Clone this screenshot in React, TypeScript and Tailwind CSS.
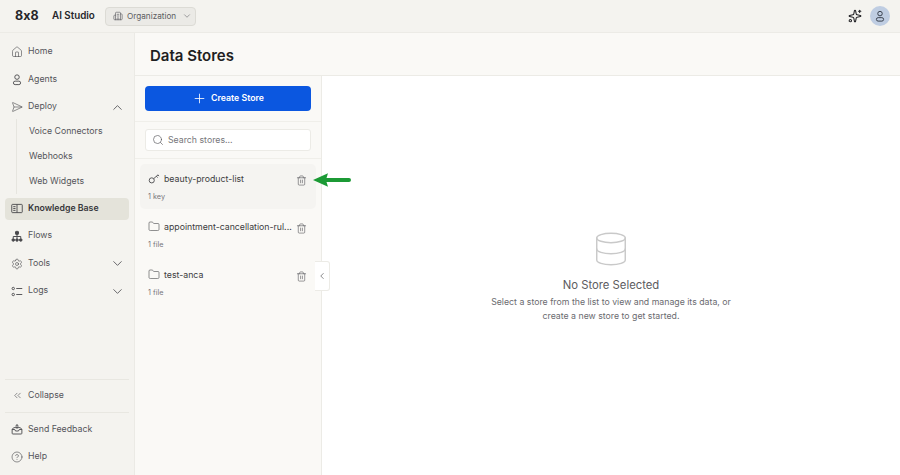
import {
  Building2,
  ChevronDown,
  ChevronLeft,
  ChevronUp,
  ChevronsLeft,
  CircleHelp,
  Database,
  Folder,
  House,
  Plus,
  Search,
  SendHorizontal,
  Settings,
  Sparkles,
  Trash2,
} from 'lucide-react'
import type { ReactNode } from 'react'

function BookPanelIcon() {
  return (
    <svg width="13" height="13" viewBox="0 0 16 16" fill="none" stroke="currentColor" strokeWidth="1.2">
      <rect x="1" y="2.5" width="14" height="11" rx="1" />
      <path d="M8 2.5v11M3 5.5h3M3 8h3M3 10.5h3" />
    </svg>
  )
}

function LogsIcon() {
  return (
    <svg width="13" height="13" viewBox="0 0 16 16" fill="none" stroke="currentColor" strokeWidth="1.2">
      <circle cx="3" cy="4" r="1.6" />
      <circle cx="3" cy="12" r="1.6" />
      <path d="M7 4h8M7 12h8" />
    </svg>
  )
}

function FeedbackIcon() {
  return (
    <svg width="13" height="13" viewBox="0 0 16 16" fill="none" stroke="currentColor" strokeWidth="1.2">
      <path d="M1.5 7.5 4 5.5h8l2.5 2v5.5a1 1 0 0 1-1 1h-11a1 1 0 0 1-1-1z" />
      <path d="M1.5 8h3.5l1 2h4l1-2h3.5" />
      <path d="M8 7V1.5M5.8 3.6 8 1.5l2.2 2.1" />
    </svg>
  )
}

function AgentIcon({ size = 13 }: { size?: number }) {
  return (
    <svg width={size} height={size} viewBox="0 0 16 16" fill="none" stroke="currentColor" strokeWidth="1.2">
      <circle cx="8" cy="4.8" r="3" />
      <rect x="3.2" y="10.2" width="9.6" height="4.6" rx="2.3" />
    </svg>
  )
}

function FlowsIcon() {
  return (
    <svg width="13" height="13" viewBox="0 0 16 16" fill="none" stroke="currentColor" strokeWidth="1.3">
      <rect x="6" y="1.2" width="4" height="4" rx="0.8" fill="currentColor" />
      <path d="M8 5.2v5M3 10.5V8h10v2.5" />
      <circle cx="3" cy="12.6" r="1.7" fill="currentColor" />
      <circle cx="8" cy="12.6" r="1.7" fill="currentColor" />
      <circle cx="13" cy="12.6" r="1.7" fill="currentColor" />
    </svg>
  )
}

function KeyIcon() {
  return (
    <svg width="13" height="13" viewBox="0 0 16 16" fill="none" stroke="currentColor" strokeWidth="1.2">
      <circle cx="5" cy="10.5" r="3.4" />
      <path d="M7.6 8.2 13.5 3M11.2 5l1.6 1.8M13.2 3.2l1.4 1.6" />
    </svg>
  )
}

function NavItem({ icon, label, chevron, active }: { icon: ReactNode; label: string; chevron?: 'up' | 'down'; active?: boolean }) {
  return (
    <div
      className={`flex h-[22px] items-center gap-[5px] rounded-[4px] pl-[6px] text-[8.75px] ${
        active ? 'bg-[#e4e3da] font-semibold text-[#37373a]' : 'text-[#55555a]'
      }`}
    >
      <span className="flex w-[12px] justify-center text-[#48484c]">{icon}</span>
      <span className="flex-1">{label}</span>
      {chevron === 'up' && <ChevronUp size={15} strokeWidth={1.3} className="mr-[4px] text-[#48484c]" />}
      {chevron === 'down' && <ChevronDown size={15} strokeWidth={1.3} className="mr-[4px] text-[#48484c]" />}
    </div>
  )
}

function SubItem({ label }: { label: string }) {
  return <div className="flex h-[25px] items-center pl-[12px] text-[8.75px] text-[#55555a]">{label}</div>
}

function StoreRow({ icon, name, sub, selected }: { icon: ReactNode; name: string; sub: string; selected?: boolean }) {
  return (
    <div className={`h-[45px] rounded-[5px] pl-[8px] pr-[9px] pt-[7px] ${selected ? 'bg-[#f5f4f1]' : ''}`}>
      <div className="flex h-[18px] items-center">
        <span className="mr-[4px] flex w-[12px] -translate-y-[2px] justify-center text-[#48484c]">{icon}</span>
        <span className="min-w-0 flex-1 whitespace-nowrap text-[8.75px] text-[#3d3d40]">{name}</span>
        <Trash2 size={11} strokeWidth={1.3} className="ml-[3px] shrink-0 text-[#55555a]" />
      </div>
      <div className="mt-[1px] text-[7.25px] leading-[14px] text-[#77777b]">{sub}</div>
    </div>
  )
}

export default function App() {
  return (
    <div className="relative flex h-[475px] w-[900px] flex-col overflow-hidden bg-[#f4f3ef] font-['Inter',sans-serif]">
      {/* Top bar */}
      <header className="flex h-[33px] shrink-0 items-center border-b border-[#ecebe6] pl-[15px] pr-[10px]">
        <span className="w-[37px] text-[12.5px] font-bold text-[#26262a] [font-feature-settings:'calt'_0]">8x8</span>
        <span className="w-[53px] text-[9.8px] font-semibold text-[#26262a]">AI Studio</span>
        <div className="flex h-[19px] w-[91px] items-center gap-[4px] rounded-[4px] border border-[#dcdbd5] bg-[#ebeae6] pl-[7px] text-[8.2px] text-[#5c5c60]">
          <Building2 size={10} strokeWidth={1.5} />
          <span>Organization</span>
          <ChevronDown size={10} strokeWidth={1.3} className="ml-[2px]" />
        </div>
        <div className="ml-auto flex items-center gap-[8px]">
          <Sparkles size={14} strokeWidth={1.8} className="text-[#222225]" />
          <div className="flex h-[20px] w-[20px] items-center justify-center rounded-full bg-[#bfcde2] text-[#2c3340]">
            <AgentIcon size={12} />
          </div>
        </div>
      </header>

      <div className="flex min-h-0 flex-1">
        {/* Sidebar */}
        <aside className="flex w-[135px] shrink-0 flex-col border-r border-[#ebeae5] px-[5px] pt-[8px]">
          <nav className="flex flex-col gap-[5.5px]">
            <NavItem icon={<House size={14} strokeWidth={1.2} />} label="Home" />
            <NavItem icon={<AgentIcon />} label="Agents" />
            <NavItem icon={<SendHorizontal size={14} strokeWidth={1.2} />} label="Deploy" chevron="up" />
          </nav>
          <div className="ml-[11px] mt-[1px] flex flex-col border-l border-[#e6e5df]">
            <SubItem label="Voice Connectors" />
            <SubItem label="Webhooks" />
            <SubItem label="Web Widgets" />
          </div>
          <nav className="mt-[3.5px] flex flex-col gap-[5.5px]">
            <NavItem icon={<BookPanelIcon />} label="Knowledge Base" active />
            <NavItem icon={<FlowsIcon />} label="Flows" />
            <NavItem icon={<Settings size={14} strokeWidth={1.2} />} label="Tools" chevron="down" />
            <NavItem icon={<LogsIcon />} label="Logs" chevron="down" />
          </nav>
          <div className="mt-auto flex flex-col">
            <div className="border-t border-[#e8e7e1] py-[5px]">
              <NavItem icon={<ChevronsLeft size={11} strokeWidth={1.3} />} label="Collapse" />
            </div>
            <div className="flex flex-col gap-[5.5px] border-t border-[#e8e7e1] pb-[7px] pt-[6px]">
              <NavItem icon={<FeedbackIcon />} label="Send Feedback" />
              <NavItem icon={<CircleHelp size={14} strokeWidth={1.2} />} label="Help" />
            </div>
          </div>
        </aside>

        {/* Main */}
        <main className="flex min-w-0 flex-1 flex-col bg-[#faf9f6]">
          <div className="flex h-[43px] shrink-0 items-center border-b border-[#ecebe6] pl-[15px] pt-[5px] text-[15px] font-semibold text-[#1f1f22]">
            Data Stores
          </div>
          <div className="flex min-h-0 flex-1">
            <section className="flex w-[187px] shrink-0 flex-col border-r border-[#ecebe6]">
              <div className="h-[46px] border-b border-[#f0efea] px-[10px] pt-[10px]">
                <div className="flex h-[25px] items-center justify-center gap-[4px] rounded-[4px] bg-[#0b57e0] text-[8.75px] font-semibold text-white">
                  <Plus size={15} strokeWidth={1.3} />
                  <span className="pt-[1px]">Create Store</span>
                </div>
              </div>
              <div className="h-[37px] border-b border-[#f0efea] px-[10px] pt-[7px]">
                <div className="flex h-[22px] items-center gap-[4px] rounded-[3px] border border-[#ecebe6] bg-white pl-[6px] text-[8.75px] text-[#77777b]">
                  <Search size={12} strokeWidth={1.3} className="text-[#55555a]" />
                  <span className="pt-[2px]">Search stores...</span>
                </div>
              </div>
              <div className="flex flex-col gap-[3px] px-[5px] pt-[5px]">
                <StoreRow icon={<KeyIcon />} name="beauty-product-list" sub="1 key" selected />
                <StoreRow icon={<Folder size={13} strokeWidth={1.2} />} name="appointment-cancellation-rul..." sub="1 file" />
                <StoreRow icon={<Folder size={13} strokeWidth={1.2} />} name="test-anca" sub="1 file" />
              </div>
            </section>
            <section className="flex flex-1 flex-col items-center bg-white pt-[154px]">
              <Database size={38} strokeWidth={0.9} className="text-[#c9c9c9]" />
              <div className="mt-[8px] text-[11.3px] leading-[18px] text-[#5c5c60]">No Store Selected</div>
              <p className="mt-[1px] w-[250px] text-center text-[8.75px] leading-[14px] text-[#6b6b70]">
                Select a store from the list to view and manage its data, or create a new store to get started.
              </p>
            </section>
          </div>
        </main>
      </div>

      {/* Collapse tab over the panel edge */}
      <div className="absolute left-[315px] top-[261px] flex h-[30px] w-[15px] items-center justify-center rounded-r-[3px] border border-l-0 border-[#ecebe6] bg-white text-[#4f4f52]">
        <ChevronLeft size={10} strokeWidth={1.6} />
      </div>

      {/* Green annotation arrow */}
      <svg className="absolute left-[312px] top-[170px]" width="42" height="20" viewBox="0 0 42 20">
        <path d="M1 10 16 3.2 14.5 8H37a2 2 0 0 1 0 4H14.5L16 16.8z" fill="#1c9a35" />
      </svg>
    </div>
  )
}
